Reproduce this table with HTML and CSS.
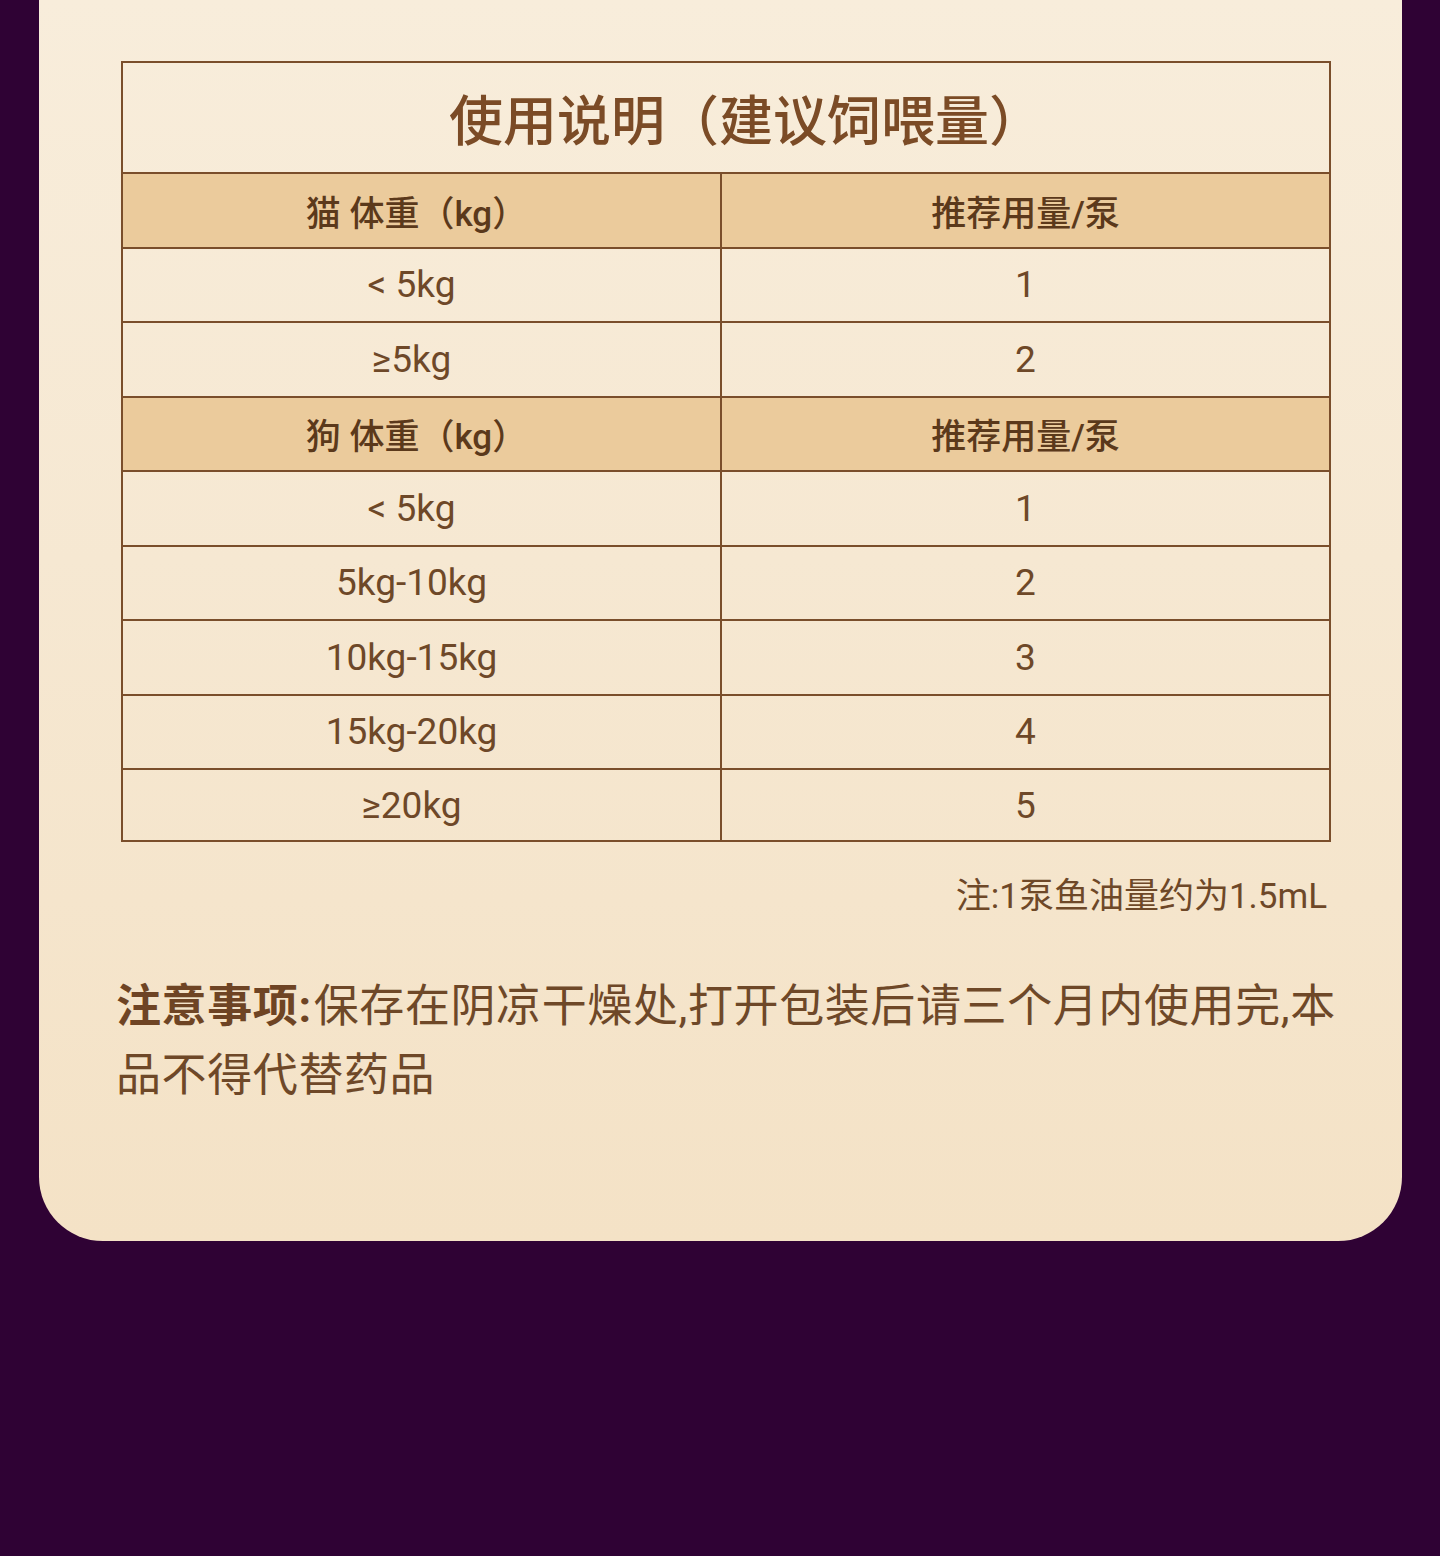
FILE: index.html
```html
<!DOCTYPE html>
<html lang="zh-CN">
<head>
<meta charset="utf-8">
<title>使用说明</title>
<link rel="stylesheet" href="styles.css">
</head>
<body>
<div class="page">
  <div class="card">
    <table class="dose">
      <colgroup><col class="col-left"><col class="col-right"></colgroup>
      <tr class="title-row"><th colspan="2" class="title">使用说明（建议饲喂量）</th></tr>
      <tr class="head"><th class="l">猫 体重（kg）</th><th>推荐用量/泵</th></tr>
      <tr><td class="l">&lt; 5kg</td><td>1</td></tr>
      <tr><td class="l">≥5kg</td><td>2</td></tr>
      <tr class="head"><th class="l">狗 体重（kg）</th><th>推荐用量/泵</th></tr>
      <tr><td class="l">&lt; 5kg</td><td>1</td></tr>
      <tr><td class="l">5kg-10kg</td><td>2</td></tr>
      <tr><td class="l">10kg-15kg</td><td>3</td></tr>
      <tr><td class="l">15kg-20kg</td><td>4</td></tr>
      <tr class="last"><td class="l">≥20kg</td><td>5</td></tr>
    </table>
    <p class="note">注:1泵鱼油量约为1.5mL</p>
    <p class="caution"><b>注意事项:</b>保存在阴凉干燥处,打开包装后请三个月内使用完,本品不得代替药品</p>
  </div>
</div>
</body>
</html>
```
FILE: styles.css
```css
html, body {
  margin: 0;
  padding: 0;
}
body {
  background: #2f0234;
  font-family: Roboto, "Noto Sans CJK SC", sans-serif;
}
.page {
  width: 1440px;
  height: 1556px;
  padding-left: 39px;
  box-sizing: border-box;
}
.card {
  width: 1363px;
  height: 1241px;
  box-sizing: border-box;
  padding: 61px 71px 0 82px;
  border-radius: 0 0 64px 64px;
  background: linear-gradient(180deg, #f8eddb 0%, #f6e8d2 45%, #f4e2c6 100%);
}
.dose {
  width: 1208px;
  border-collapse: collapse;
  table-layout: fixed;
  border: 2px solid #7a4e2b;
}
.col-left { width: 599px; }
.col-right { width: 609px; }
.dose th, .dose td {
  border: 2px solid #7a4e2b;
  text-align: center;
  padding: 0;
  height: 72.5px;
}
.dose .l { padding-right: 20px; }
.dose .head .l { padding-right: 10px; }
.title-row .title {
  height: 109px;
  padding-left: 40px;
  font-size: 54px;
  font-weight: 500;
  color: #7b4b26;
}
.head th {
  background: #ebcb9c;
  font-size: 35px;
  font-weight: 500;
  color: #5b391b;
}
.dose td {
  font-size: 37px;
  font-weight: 400;
  color: #6e4828;
}
.dose .last td { height: 70px; }
.note {
  margin: 30px 4px 0 0;
  text-align: right;
  font-size: 35px;
  line-height: 50px;
  color: #6e4828;
}
.caution {
  margin: 50px 0 0 -5px;
  width: 1236px;
  font-size: 45px;
  line-height: 69px;
  letter-spacing: 0.6px;
  color: #6e4828;
}
.caution b {
  font-weight: 700;
  color: #6e4424;
  margin-right: 2px;
}
```
